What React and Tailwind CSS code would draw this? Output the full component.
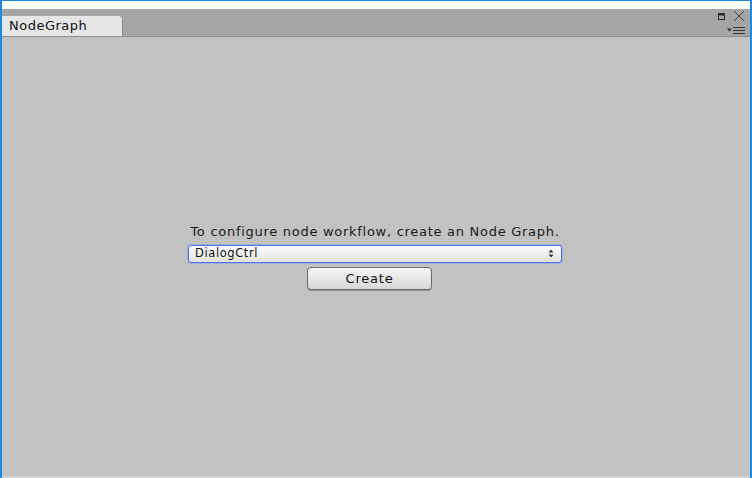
import React from 'react';

const FONT = { fontFamily: '"DejaVu Sans", Verdana, sans-serif' };

// 右上角窗口控制按钮
const WindowControls = () => (
    <div className="flex flex-col items-end pr-[5px] pt-[1px] gap-[5px]">
        <div className="flex items-center gap-[8px]">
            <svg width="7" height="7" viewBox="0 0 7 7">
                <rect x="0.5" y="0.5" width="6" height="6" fill="none" stroke="#2a2a2a" strokeWidth="1" />
                <rect x="0" y="0" width="7" height="2.5" fill="#2a2a2a" />
            </svg>
            <svg width="12" height="12" viewBox="0 0 12 12">
                <path d="M1 1 L11 11 M11 1 L1 11" stroke="#444" strokeWidth="1" />
            </svg>
        </div>
        <svg width="18" height="7" viewBox="0 0 18 7">
            <path d="M0 1.5 L5 1.5 L2.5 4.5 Z" fill="#333" />
            <path d="M6 0.5 H18 M6 3.5 H18 M6 6.5 H18" stroke="#333" strokeWidth="1.2" />
        </svg>
    </div>
);

const App = () => {
    return (
        <div className="w-[752px] h-[478px] flex flex-col bg-white border-t-[1px] border-x-2 border-[#1c8ae4]" style={FONT}>
            <div className="h-[8px] bg-white" />

            {/* 标签栏 */}
            <div className="h-[28px] bg-[#a5a5a5] flex items-end justify-between border-b border-[#8e8e8e]">
                <div className="h-[20px] w-[121px] bg-[#e6e6e6] rounded-tr-[4px] border-r border-[#8a8a8a] flex items-center pl-[7px] text-[13px] tracking-[0.5px] text-[#111]">
                    NodeGraph
                </div>
                <div className="self-stretch">
                    <WindowControls />
                </div>
            </div>

            {/* 内容区 */}
            <div className="flex-1 bg-[#c2c2c2] flex items-center justify-center border-b-2 border-[#d4d4d4] pr-[2px]">
                <div className="w-[374px] flex flex-col items-center">
                    <p className="text-[13px] tracking-[0.72px] text-[#1a1a1a] leading-[16px] mb-[5px] whitespace-nowrap">
                        To configure node workflow, create an Node Graph.
                    </p>
                    <div className="w-[374px] h-[18px] rounded-[3px] border border-[#4a70ee] bg-gradient-to-b from-[#fdfdfd] to-[#e2e2e2] flex items-center justify-between pl-[6px] pr-[7px] shadow-[0_0_0_1px_rgba(110,140,250,0.35)]">
                        <span className="text-[11.5px] tracking-[0.6px] text-[#111] leading-none">DialogCtrl</span>
                        <svg width="6" height="9" viewBox="0 0 6 9">
                            <path d="M3 0.5 L5.5 3.5 H0.5 Z M3 8.5 L5.5 5.5 H0.5 Z" fill="#333" />
                        </svg>
                    </div>
                    <button className="self-start ml-[119px] mt-[4px] w-[125px] h-[23px] rounded-[4px] border border-[#6a6a6a] bg-gradient-to-b from-[#f6f6f6] to-[#d8d8d8] text-[13px] tracking-[0.8px] text-[#111] leading-none shadow-[0_1px_0_rgba(0,0,0,0.25)]">
                        Create
                    </button>
                </div>
            </div>
        </div>
    );
};

export default App;
